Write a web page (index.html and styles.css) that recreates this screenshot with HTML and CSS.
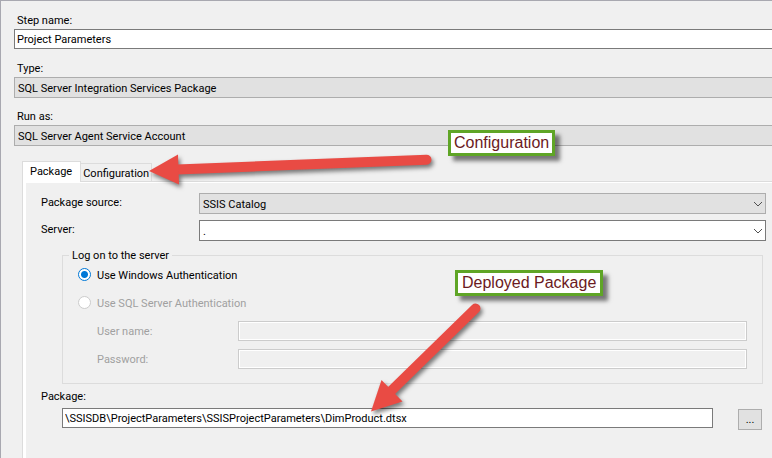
FILE: index.html
```html
<!DOCTYPE html>
<html lang="en">
<head>
  <meta charset="UTF-8" />
  <meta name="viewport" content="width=device-width, initial-scale=1.0"/>
  <title>Job Step Properties</title>
  <link rel="stylesheet" href="styles.css">
</head>
<body>

  <main class="dialog">
    <form class="step-form">
      <label class="label" for="stepName">Step name:</label>
      <input class="textbox" type="text" id="stepName" value="Project Parameters">

      <label class="label" for="stepType">Type:</label>
      <div class="combo">
        <select id="stepType"><option>SQL Server Integration Services Package</option></select>
        <svg class="chevron" viewBox="0 0 10 6"><path d="M1 1l4 4 4-4"/></svg>
      </div>

      <label class="label" for="runAs">Run as:</label>
      <div class="combo">
        <select id="runAs"><option>SQL Server Agent Service Account</option></select>
        <svg class="chevron" viewBox="0 0 10 6"><path d="M1 1l4 4 4-4"/></svg>
      </div>
    </form>

    <nav class="tabs">
      <button class="tab active" type="button">Package</button>
      <button class="tab" type="button">Configuration</button>
    </nav>

    <section class="pane">
      <div class="row">
        <label for="source">Package source:</label>
        <div class="combo">
          <select id="source"><option>SSIS Catalog</option></select>
          <svg class="chevron" viewBox="0 0 10 6"><path d="M1 1l4 4 4-4"/></svg>
        </div>
      </div>
      <div class="row">
        <label for="server">Server:</label>
        <div class="combo editable">
          <select id="server"><option>.</option></select>
          <svg class="chevron" viewBox="0 0 10 6"><path d="M1 1l4 4 4-4"/></svg>
        </div>
      </div>

      <fieldset class="logon">
        <legend>Log on to the server</legend>
        <label class="choice">
          <input type="radio" name="auth" checked>
          Use Windows Authentication
        </label>
        <label class="choice disabled">
          <input type="radio" name="auth" disabled>
          Use SQL Server Authentication
        </label>
        <div class="credential">
          <label for="user">User name:</label>
          <input class="textbox" type="text" id="user" disabled>
        </div>
        <div class="credential">
          <label for="password">Password:</label>
          <input class="textbox" type="password" id="password" disabled>
        </div>
      </fieldset>

      <label class="package-label" for="package">Package:</label>
      <div class="package-row">
        <input class="textbox" type="text" id="package" value="\SSISDB\ProjectParameters\SSISProjectParameters\DimProduct.dtsx">
        <button class="browse" type="button">...</button>
      </div>
    </section>

    <!-- Callouts over the dialog -->
    <svg class="arrows" width="772" height="458" viewBox="0 0 772 458">
      <g>
        <path class="shaft" d="M177 169.500L426.500 159.700"/>
        <path class="head" d="M149 171L178 154.500L179 184.500Z"/>
      </g>
      <g>
        <path class="shaft" d="M390 392L475.500 308.500"/>
        <path class="head" d="M371 411.500L381.500 380L402.500 401.500Z"/>
      </g>
    </svg>
    <div class="callout callout-config">Configuration</div>
    <div class="callout callout-package">Deployed Package</div>
  </main>

</body>
</html>
```

FILE: styles.css
```css
* {
  box-sizing: border-box;
}

body {
  margin: 0;
  font-family: Roboto, "Liberation Sans", Arial, sans-serif;
  font-size: 11px;
  line-height: 16px;
  color: #000;
  background-color: #f0f0f0;
  overflow: hidden;
}

input,
select,
button {
  font: inherit;
  color: inherit;
  margin: 0;
}

.dialog {
  position: relative;
  display: flex;
  flex-direction: column;
  min-height: 100vh;
  border-top: 1px solid #a8a8b0;
  border-left: 1px solid #a8a8b0;
  overflow: hidden;
}

/* the form runs on past the right edge of the window */
.step-form {
  display: flex;
  flex-direction: column;
  margin: 12px -12px 0 13px;
}

.label {
  padding-left: 3px;
}

.textbox {
  height: 20px;
  padding: 0 2px;
  border: 1px solid #7a7a7a;
  border-radius: 0;
  background-color: #fff;
}

.step-form .textbox {
  margin-bottom: 12px;
}

.step-form .combo {
  margin-bottom: 11px;
}

.combo {
  position: relative;
  flex: 1;
}

.combo select {
  display: block;
  width: 100%;
  height: 21px;
  padding: 2px 20px 0 3px;
  border: 1px solid #adadad;
  border-radius: 0;
  background-color: #e1e1e1;
  appearance: none;
}

.combo.editable select {
  border-color: #7a7a7a;
  background-color: #fff;
}

.chevron {
  position: absolute;
  top: 8px;
  right: 3px;
  width: 10px;
  height: 6px;
  fill: none;
  stroke: #505050;
  pointer-events: none;
}

/* Tabs */
.tabs {
  display: flex;
  align-items: flex-end;
  height: 20px;
  margin: 4px 0 0 21px;
}

.tab {
  height: 18px;
  padding: 2px 2px 0;
  border: 1px solid #dcdcdc;
  border-left: none;
  border-bottom: none;
  background-color: #f0f0f0;
}

.tab.active {
  position: relative;
  z-index: 1;
  height: 21px;
  margin-bottom: -1px;
  padding: 0 8px 0 7px;
  border-left: 1px solid #dcdcdc;
  background-color: #fff;
}

.pane {
  flex: 1;
  margin-left: 21px;
  padding: 10px 6px 0 14px;
  border-top: 1px solid #dcdcdc;
  border-left: 1px solid #dcdcdc;
  box-shadow: inset 3px 1px #fff;
}

.row {
  display: flex;
  margin-bottom: 5px;
  padding-top: 1px;
}

.row label {
  width: 162px;
  padding: 2px 4px;
}

.logon {
  margin: 6px 3px 0 25px;
  padding: 5px 15px 6px;
  border: 1px solid #dcdcdc;
}

.logon legend {
  margin-left: -9px;
  padding: 2px 3px 0;
  line-height: 14px;
}

.choice {
  display: flex;
  align-items: flex-start;
  gap: 6px;
  margin-bottom: 12px;
}

.choice.disabled {
  margin-bottom: 9px;
}

.choice input {
  width: 13px;
  height: 13px;
  border: 1px solid #0078d7;
  border-radius: 50%;
  background-color: #fff;
  appearance: none;
}

.choice input:checked {
  background: radial-gradient(circle, #0078d7 3px, #fff 4px);
}

.choice input:disabled {
  border-color: #ccc;
}

.disabled,
.credential {
  color: #a0a0a0;
}

.credential {
  display: flex;
  align-items: center;
  margin-bottom: 8px;
}

.credential label {
  width: 160px;
  padding: 2px 0 0 19px;
}

.credential .textbox {
  flex: 1;
  border-color: #ccc;
  background-color: #f0f0f0;
  box-shadow: inset 0 0 0 1px #fff;
}

.package-label {
  display: block;
  margin: 5px 0 3px;
  padding-left: 4px;
}

.package-row {
  display: flex;
  gap: 25px;
  margin: 0 4px 0 25px;
}

.package-row .textbox {
  flex: 1;
}

.browse {
  width: 24px;
  height: 21px;
  margin-top: 1px;
  padding: 0;
  border: 1px solid #adadad;
  background-color: #e1e1e1;
}

/* Callouts */
.arrows {
  position: absolute;
  top: -1px;
  left: -1px;
  pointer-events: none;
}

.arrows g {
  filter: drop-shadow(2px 3px 2px rgba(0, 0, 0, 0.5));
}

.shaft {
  stroke: #e94b44;
  stroke-width: 10px;
  stroke-linecap: round;
}

.head {
  fill: #e94b44;
}

.callout {
  position: absolute;
  padding: 0 3px;
  border: 3px solid #5fa526;
  background-color: #fff;
  box-shadow: 5px 5px 4px rgba(0, 0, 0, 0.5);
  color: #6b1a22;
  font-family: "Liberation Sans", Arial, sans-serif;
  font-size: 16px;
  line-height: 20px;
}

.callout-config {
  top: 129px;
  left: 447px;
}

.callout-package {
  top: 269px;
  left: 454px;
  padding: 0 4px;
}
```
